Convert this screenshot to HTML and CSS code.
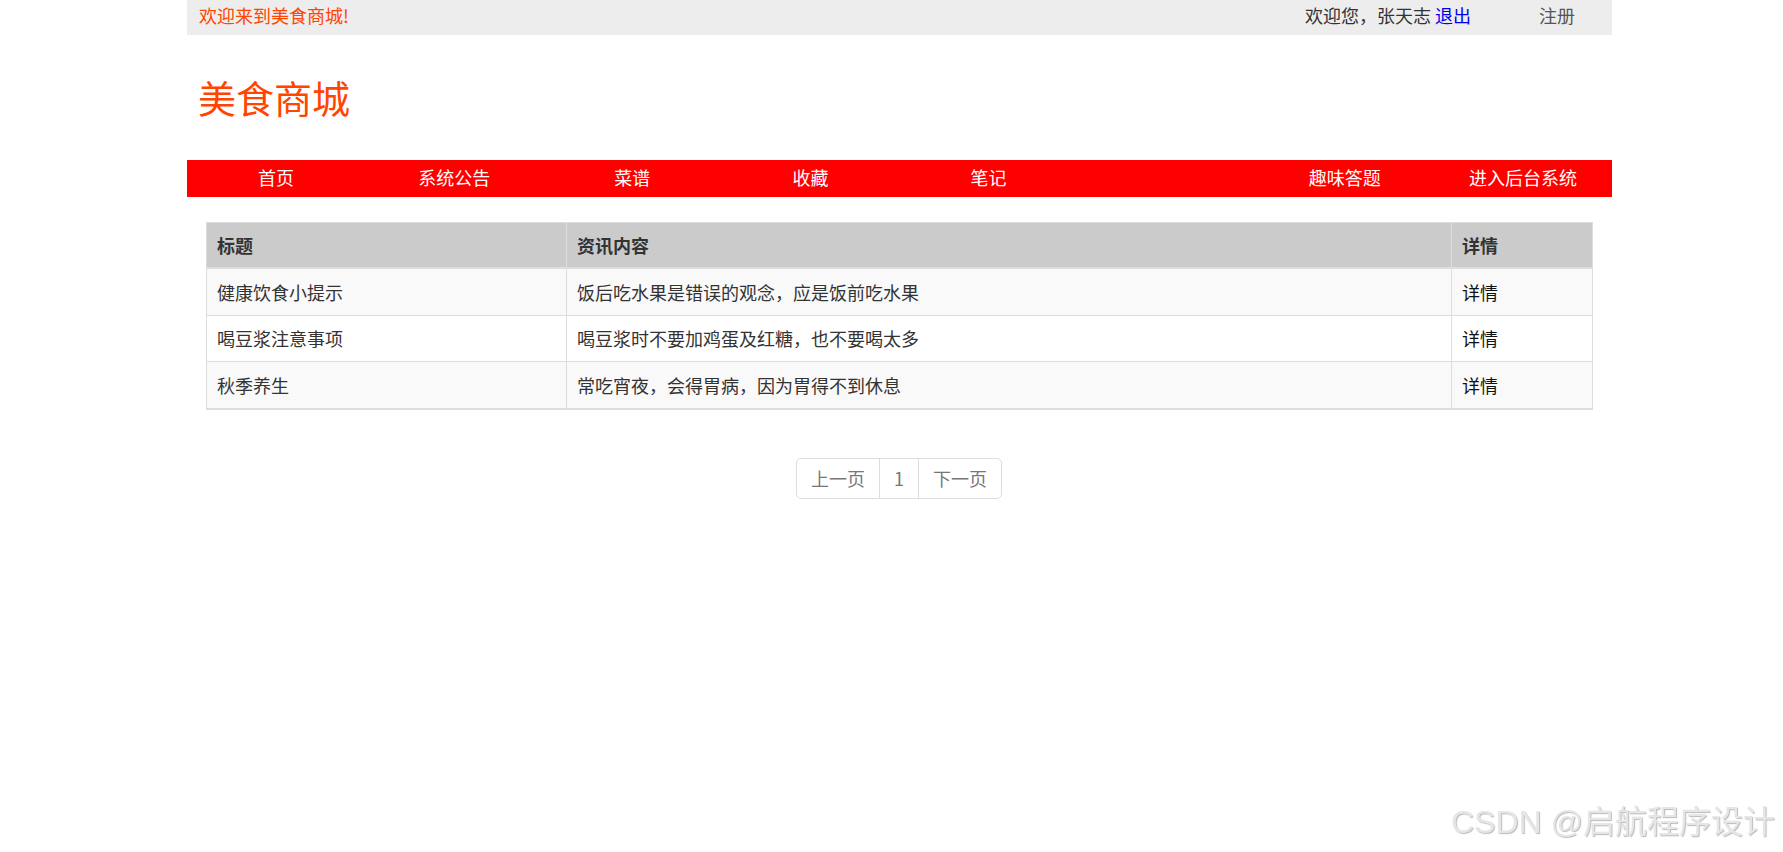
FILE: index.html
```html
<!DOCTYPE html>
<html lang="zh-CN">
<head>
  <meta charset="UTF-8" />
  <meta name="viewport" content="width=device-width, initial-scale=1.0"/>
  <title>美食商城</title>
  <link rel="stylesheet" href="styles.css">
</head>
<body>
  <div class="wrap">
    <div class="topbar">
      <span class="hello">欢迎来到美食商城!</span>
      <div class="user">
        <span>欢迎您，张天志 </span><a href="#" class="logout">退出</a>
        <a href="#" class="reg">注册</a>
      </div>
    </div>

    <div class="header">
      <h1 class="logo">美食商城</h1>
    </div>

    <ul class="nav">
      <li><a href="#">首页</a></li>
      <li><a href="#">系统公告</a></li>
      <li><a href="#">菜谱</a></li>
      <li><a href="#">收藏</a></li>
      <li><a href="#">笔记</a></li>
      <li class="blank"></li>
      <li><a href="#">趣味答题</a></li>
      <li><a href="#">进入后台系统</a></li>
    </ul>

    <table class="news">
      <thead>
        <tr>
          <th class="c1">标题</th>
          <th class="c2">资讯内容</th>
          <th class="c3">详情</th>
        </tr>
      </thead>
      <tbody>
        <tr>
          <td>健康饮食小提示</td>
          <td>饭后吃水果是错误的观念，应是饭前吃水果</td>
          <td><a href="#">详情</a></td>
        </tr>
        <tr>
          <td>喝豆浆注意事项</td>
          <td>喝豆浆时不要加鸡蛋及红糖，也不要喝太多</td>
          <td><a href="#">详情</a></td>
        </tr>
        <tr>
          <td>秋季养生</td>
          <td>常吃宵夜，会得胃病，因为胃得不到休息</td>
          <td><a href="#">详情</a></td>
        </tr>
      </tbody>
    </table>

    <div class="pager">
      <a href="#">上一页</a>
      <a href="#">1</a>
      <a href="#">下一页</a>
    </div>
  </div>

  <div class="mark">CSDN @启航程序设计</div>
</body>
</html>
```

FILE: styles.css
```css
body {
  margin: 0;
  font-family: "Noto Sans CJK SC", "Liberation Sans", sans-serif;
  font-size: 18px;
  color: #333;
  background: #fff;
}
a {
  text-decoration: none;
}
.wrap {
  width: 1425px;
  margin-left: 187px;
}
.topbar {
  height: 35px;
  line-height: 30px;
  background: #ededed;
  display: flex;
  justify-content: space-between;
  padding: 0 37px 0 12px;
}
.hello {
  color: #ff4500;
}
.user span {
  color: #333;
}
.logout {
  color: #0000ee;
}
.reg {
  color: #555;
  margin-left: 64px;
}
.header {
  height: 125px;
  display: flex;
  align-items: center;
  padding-left: 11px;
}
.logo {
  margin: 0 0 2px;
  font-size: 38px;
  font-weight: normal;
  color: #ff4500;
  line-height: 1;
}
.nav {
  list-style: none;
  margin: 0;
  padding: 0;
  height: 37px;
  background: #ff0000;
  display: flex;
}
.nav li {
  width: 12.5%;
  text-align: center;
  line-height: 34px;
}
.nav a {
  color: #fff;
}
.news {
  width: 1387px;
  margin: 25px 19px 0;
  border-collapse: collapse;
  border: 1px solid #ddd;
  border-bottom-width: 2px;
}
.news th,
.news td {
  text-align: left;
  padding: 0 10px;
  border: 1px solid #ddd;
}
.news th {
  background: #cbcbcb;
  height: 44px;
  border-bottom: 2px solid #ddd;
  font-weight: bold;
}
.news td {
  height: 45.5px;
}
.news tbody tr:nth-child(odd) {
  background: #f9f9f9;
}
.news td a {
  color: #111;
}
.c1 {
  width: 339px;
}
.c2 {
  width: 864px;
}
.pager {
  display: flex;
  justify-content: center;
  margin-top: 48px;
}
.pager a {
  color: #777;
  padding: 7px 14px;
  line-height: 25px;
  border: 1px solid #ddd;
  margin-left: -1px;
}
.pager a:first-child {
  border-radius: 5px 0 0 5px;
}
.pager a:last-child {
  border-radius: 0 5px 5px 0;
}
.mark {
  position: fixed;
  right: 8px;
  bottom: 10px;
  font-size: 32px;
  color: #e6e6e6;
  text-shadow: 1px 1px 1px #bbb;
  font-family: "Liberation Sans", "Noto Sans CJK SC", sans-serif;
}
```
